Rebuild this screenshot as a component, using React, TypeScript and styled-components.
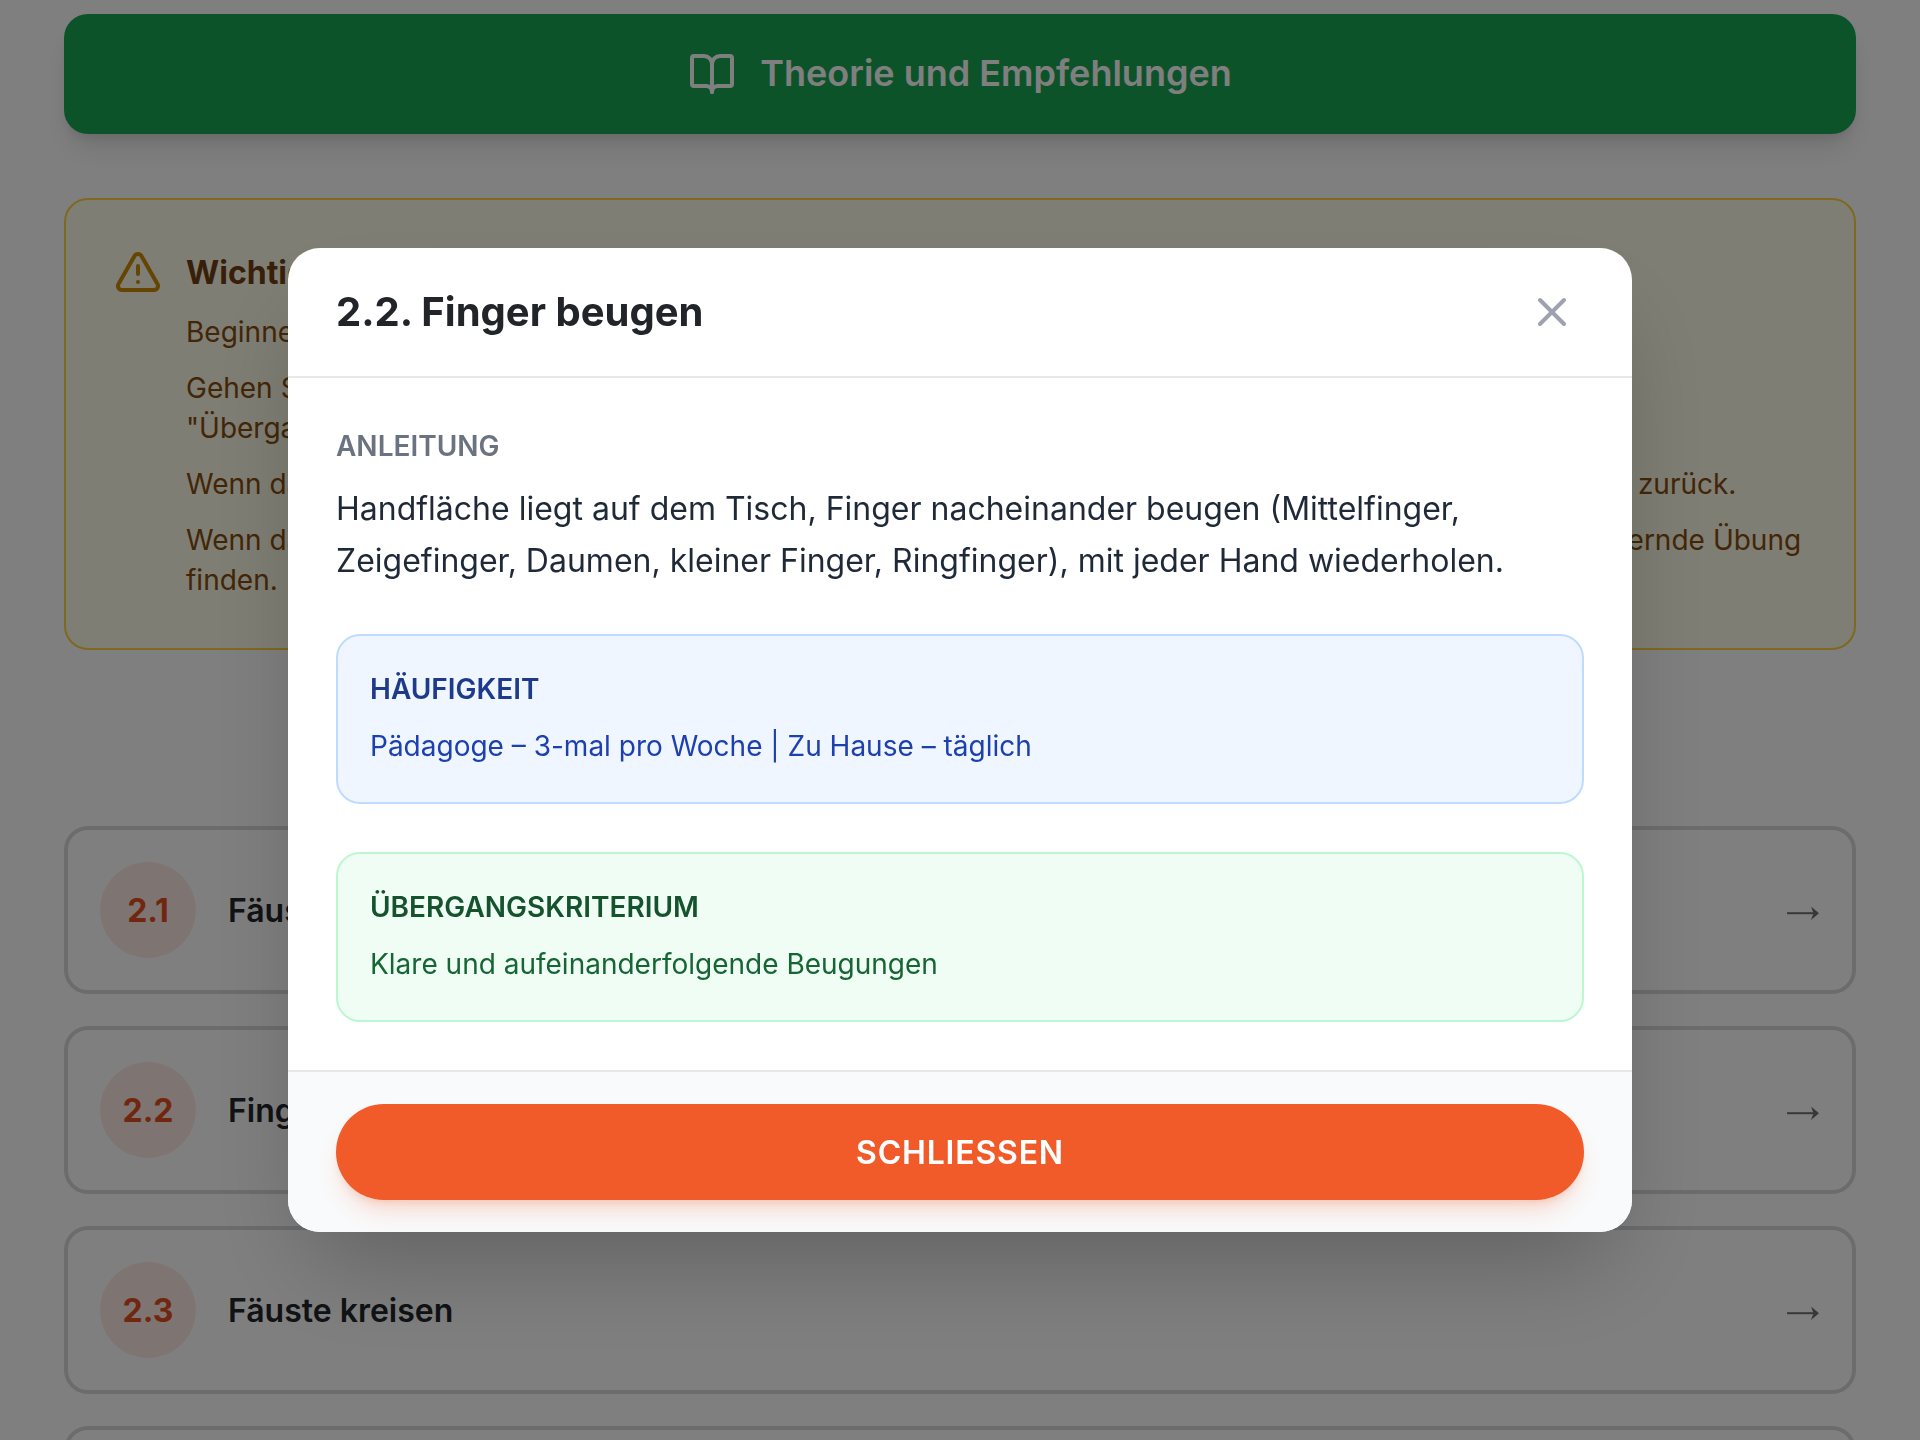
import React from "react";
import styled, { createGlobalStyle } from "styled-components";
import { BookOpen, TriangleAlert, X } from "lucide-react";

const Global = createGlobalStyle`
  html, body { margin: 0; padding: 0; background: #fff; }
  * { box-sizing: border-box; }
  body { font-family: Inter, "Liberation Sans", sans-serif; }
`;

const Page = styled.div`
  height: 1440px;
  overflow: hidden;
  padding: 14px 64px 0;
  background: #fff;
`;

const TheoryBar = styled.div`
  height: 120px;
  border-radius: 24px;
  background: #1aa653;
  color: #fff;
  display: flex;
  align-items: center;
  justify-content: center;
  gap: 24px;
  font-size: 36px;
  line-height: 40px;
  font-weight: 600;
  box-shadow: 0 20px 30px -6px rgba(0, 0, 0, 0.1), 0 8px 12px -4px rgba(0, 0, 0, 0.1);
  margin-bottom: 64px;
`;

const TheoryLabel = styled.span`
  padding-bottom: 2px;
`;

const Warning = styled.section`
  border: 2px solid #fbd438;
  background: #fefce8;
  border-radius: 24px;
  padding: 48px;
  display: flex;
  gap: 24px;
  margin-bottom: 176px;
  color: #ca8a04;
`;

const WarningBody = styled.div`
  flex: 1;
  min-width: 0;
`;

const WarningTitle = styled.h3`
  margin: 1px 0 15px;
  font-size: 32px;
  line-height: 48px;
  font-weight: 700;
  color: #713f12;
`;

const WarningText = styled.p`
  margin: 0 0 16px;
  font-size: 28px;
  line-height: 40px;
  word-spacing: 0.14px;
  color: #854d0e;
  &:last-child { margin-bottom: 0; }
`;

const ExerciseList = styled.div`
  display: flex;
  flex-direction: column;
  gap: 32px;
`;

const ExerciseCard = styled.div`
  height: 168px;
  border: 4px solid #d9d9d9;
  border-radius: 24px;
  padding: 32px;
  display: flex;
  align-items: center;
  gap: 32px;
`;

const NumberCircle = styled.div`
  width: 96px;
  height: 96px;
  flex: none;
  border-radius: 50%;
  background: rgba(241, 90, 41, 0.12);
  color: #e34e1e;
  display: flex;
  align-items: center;
  justify-content: center;
  font-size: 32px;
  font-weight: 700;
`;

const ExerciseName = styled.div`
  flex: 1;
  font-size: 32px;
  font-weight: 600;
  color: #212529;
`;

const ArrowIcon = styled.svg`
  flex: none;
  width: 34px;
  height: 16px;
  margin-top: 6px;
  color: #707070;
`;

const Overlay = styled.div`
  position: fixed;
  inset: 0;
  background: rgba(0, 0, 0, 0.5);
  display: flex;
  justify-content: center;
  align-items: flex-start;
  padding-top: 248px;
`;

const Modal = styled.div`
  width: 1344px;
  background: #fff;
  border-radius: 32px;
  overflow: hidden;
  box-shadow: 0 50px 100px -24px rgba(0, 0, 0, 0.25);
`;

const ModalHeader = styled.header`
  display: flex;
  align-items: center;
  justify-content: space-between;
  padding: 32px 48px;
  border-bottom: 2px solid #e5e7eb;
`;

const ModalTitle = styled.h2`
  margin: 0;
  font-size: 40px;
  line-height: 56px;
  font-weight: 700;
  color: #212529;
`;

const CloseButton = styled.button`
  width: 64px;
  height: 64px;
  padding: 8px;
  border: 0;
  background: none;
  color: #9ca3af;
  display: flex;
`;

const ModalBody = styled.div`
  padding: 48px;
`;

const SectionLabel = styled.div`
  font-size: 28px;
  line-height: 40px;
  font-weight: 600;
  color: #6b7280;
  text-transform: uppercase;
  margin-bottom: 17px;
`;

const Instructions = styled.p`
  margin: 0 0 47px;
  font-size: 32px;
  line-height: 52px;
  color: #1f2937;
`;

const InfoBox = styled.div<{ $tone: "blue" | "green" }>`
  border: 2px solid ${(p) => (p.$tone === "blue" ? "#bfdbfe" : "#bbf7d0")};
  background: ${(p) => (p.$tone === "blue" ? "#eff6ff" : "#f0fdf4")};
  border-radius: 24px;
  padding: 32px 32px 33px;
  margin-bottom: 48px;
  &:last-child { margin-bottom: 0; }
`;

const InfoTitle = styled.div<{ $tone: "blue" | "green" }>`
  font-size: 28px;
  line-height: 42px;
  font-weight: 600;
  text-transform: uppercase;
  color: ${(p) => (p.$tone === "blue" ? "#1e3a8a" : "#14532d")};
  margin-bottom: 13px;
`;

const InfoText = styled.div<{ $tone: "blue" | "green" }>`
  font-size: 28px;
  line-height: 46px;
  color: ${(p) => (p.$tone === "blue" ? "#1e40af" : "#166534")};
`;

const ModalFooter = styled.footer`
  padding: 32px 48px;
  background: #f9fafb;
  border-top: 2px solid #e5e7eb;
`;

const CloseAction = styled.button`
  width: 100%;
  height: 96px;
  border: 0;
  border-radius: 48px;
  background: #f15a29;
  color: #fff;
  font-family: inherit;
  font-size: 32px;
  font-weight: 600;
  letter-spacing: 0.8px;
  text-transform: uppercase;
  box-shadow: 0 16px 24px -6px rgba(241, 90, 41, 0.2), 0 6px 10px -4px rgba(241, 90, 41, 0.2);
`;

const exercises = [
  ["2.1", "Fäuste ballen"],
  ["2.2", "Finger beugen"],
  ["2.3", "Fäuste kreisen"],
  ["2.4", "Finger spreizen"],
];

export default function App() {
  return (
    <>
      <Global />
      <Page>
        <TheoryBar>
          <BookOpen size={48} strokeWidth={2} />
          <TheoryLabel>Theorie und Empfehlungen</TheoryLabel>
        </TheoryBar>

        <Warning>
          <TriangleAlert size={48} strokeWidth={2} style={{ flex: "none" }} />
          <WarningBody>
            <WarningTitle>Wichtige Hinweise</WarningTitle>
            <WarningText>Beginnen Sie mit der ersten Übung des Abschnitts.</WarningText>
            <WarningText>
              Gehen Sie zur nächsten Übung über, wenn das Kind die vorherige sicher beherrscht.
              <br />
              "Übergangskriterium" beachten.
            </WarningText>
            <WarningText>
              Wenn das Kind die Übung nicht schafft, kehren Sie zur vorherigen Übung und wiederholen diese in Ruhe und zurück.
            </WarningText>
            <WarningText>
              Wenn das Kind Schwierigkeiten hat, versuchen Sie gemeinsam mit dem Pädagogen eine neue passende fördernde Übung
              <br />
              finden.
            </WarningText>
          </WarningBody>
        </Warning>

        <ExerciseList>
          {exercises.map(([num, name]) => (
            <ExerciseCard key={num}>
              <NumberCircle>{num}</NumberCircle>
              <ExerciseName>{name}</ExerciseName>
              <ArrowIcon viewBox="0 0 34 16" aria-hidden="true">
                <path d="M1 8.2h28" stroke="currentColor" strokeWidth="2" fill="none" />
                <path d="M33 8.2 25 1.5 27.5 8.2 25 15z" fill="currentColor" />
              </ArrowIcon>
            </ExerciseCard>
          ))}
        </ExerciseList>
      </Page>

      <Overlay>
        <Modal>
          <ModalHeader>
            <ModalTitle>2.2. Finger beugen</ModalTitle>
            <CloseButton aria-label="Schließen">
              <X size={48} strokeWidth={2} />
            </CloseButton>
          </ModalHeader>
          <ModalBody>
            <SectionLabel>Anleitung</SectionLabel>
            <Instructions>
              Handfläche liegt auf dem Tisch, Finger nacheinander beugen (Mittelfinger, Zeigefinger, Daumen, kleiner Finger, Ringfinger), mit jeder Hand wiederholen.
            </Instructions>
            <InfoBox $tone="blue">
              <InfoTitle $tone="blue">Häufigkeit</InfoTitle>
              <InfoText $tone="blue">Pädagoge – 3-mal pro Woche | Zu Hause – täglich</InfoText>
            </InfoBox>
            <InfoBox $tone="green">
              <InfoTitle $tone="green">Übergangskriterium</InfoTitle>
              <InfoText $tone="green">Klare und aufeinanderfolgende Beugungen</InfoText>
            </InfoBox>
          </ModalBody>
          <ModalFooter>
            <CloseAction>Schließen</CloseAction>
          </ModalFooter>
        </Modal>
      </Overlay>
    </>
  );
}
